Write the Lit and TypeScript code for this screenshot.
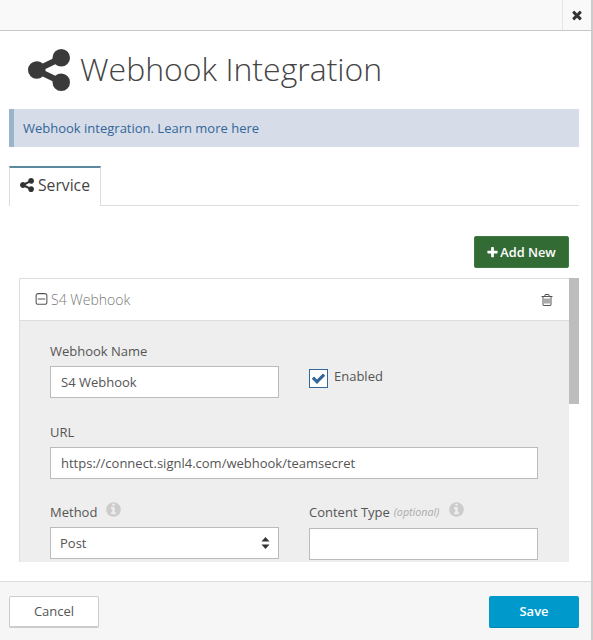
import {css, html, LitElement, svg} from 'lit';
import {customElement} from 'lit/decorators.js';

const SHARE = 'M1344 1024q133 0 226.5 93.5t93.5 226.5-93.5 226.5-226.5 93.5-226.5-93.5-93.5-226.5q0-12 2-34l-360-180q-92 86-218 86-133 0-226.5-93.5t-93.5-226.5 93.5-226.5 226.5-93.5q126 0 218 86l360-180q-2-22-2-34 0-133 93.5-226.5t226.5-93.5 226.5 93.5 93.5 226.5-93.5 226.5-226.5 93.5q-126 0-218-86l-360 180q2 22 2 34t-2 34l360 180q92-86 218-86z';
const TIMES = 'M1490 1322q0 40-28 68l-136 136q-28 28-68 28t-68-28l-294-294-294 294q-28 28-68 28t-68-28l-136-136q-28-28-28-68t28-68l294-294-294-294q-28-28-28-68t28-68l136-136q28-28 68-28t68 28l294 294 294-294q28-28 68-28t68 28l136 136q28 28 28 68t-28 68l-294 294 294 294q28 28 28 68z';
const PLUS = 'M1600 736v192q0 40-28 68t-68 28h-416v416q0 40-28 68t-68 28h-192q-40 0-68-28t-28-68v-416h-416q-40 0-68-28t-28-68v-192q0-40 28-68t68-28h416v-416q0-40 28-68t68-28h192q40 0 68 28t28 68v416h416q40 0 68 28t28 68z';
const CHECK = 'M1671 566q0 40-28 68l-724 724-136 136q-28 28-68 28t-68-28l-136-136-362-362q-28-28-28-68t28-68l136-136q28-28 68-28t68 28l294 295 656-657q28-28 68-28t68 28l136 136q28 28 28 68z';
const TRASH = 'M704 736v576q0 14-9 23t-23 9h-64q-14 0-23-9t-9-23v-576q0-14 9-23t23-9h64q14 0 23 9t9 23zm256 0v576q0 14-9 23t-23 9h-64q-14 0-23-9t-9-23v-576q0-14 9-23t23-9h64q14 0 23 9t9 23zm256 0v576q0 14-9 23t-23 9h-64q-14 0-23-9t-9-23v-576q0-14 9-23t23-9h64q14 0 23 9t9 23zm128 724v-948h-896v948q0 22 7 40.5t14.5 27 10.5 8.5h832q3 0 10.5-8.5t14.5-27 7-40.5zm-672-1076h448l-48-117q-7-9-17-11h-317q-10 2-17 11zm928 32v64q0 14-9 23t-23 9h-96v948q0 83-47 143.5t-113 60.5h-832q-66 0-113-58.5t-47-141.5v-952h-96q-14 0-23-9t-9-23v-64q0-14 9-23t23-9h309l70-167q15-37 54-63t79-26h320q40 0 79 26t54 63l70 167h309q14 0 23 9t9 23z';
const MINUS_SQUARE = 'M1344 800v64q0 14-9 23t-23 9h-832q-14 0-23-9t-9-23v-64q0-14 9-23t23-9h832q14 0 23 9t9 23zm128 448v-832q0-66-47-113t-113-47h-832q-66 0-113 47t-47 113v832q0 66 47 113t113 47h832q66 0 113-47t47-113zm128-832v832q0 119-84.5 203.5t-203.5 84.5h-832q-119 0-203.5-84.5t-84.5-203.5v-832q0-119 84.5-203.5t203.5-84.5h832q119 0 203.5 84.5t84.5 203.5z';
const INFO = 'M1152 1376v-160q0-14-9-23t-23-9h-96v-512q0-14-9-23t-23-9h-320q-14 0-23 9t-9 23v160q0 14 9 23t23 9h96v320h-96q-14 0-23 9t-9 23v160q0 14 9 23t23 9h448q14 0 23-9t9-23zm-128-896v-160q0-14-9-23t-23-9h-192q-14 0-23 9t-9 23v160q0 14 9 23t23 9h192q14 0 23-9t9-23zm640 416q0 209-103 385.5t-279.5 279.5-385.5 103-385.5-103-279.5-279.5-103-385.5 103-385.5 279.5-279.5 385.5-103 385.5 103 279.5 279.5 103 385.5z';

// All icons share the 1792 box, trimmed per icon through viewBox.
const icon = (d: string, cls: string, box = '0 0 1792 1792') => html`
  <svg class=${cls} viewBox=${box} fill="currentColor" aria-hidden="true">
    ${svg`<path d=${d}></path>`}
  </svg>`;

@customElement('app-root')
export class AppRoot extends LitElement {
  static override styles = css`
    :host {
      display: block;
      font-family: 'Open Sans', 'Liberation Sans', sans-serif;
      font-size: 13px;
      color: #444;
    }

    * {
      box-sizing: border-box;
    }

    .modal {
      height: 640px;
      display: flex;
      flex-direction: column;
      background: #fff;
      border-right: 2px solid #ccc;
      overflow: hidden;
    }

    .topbar {
      flex: none;
      height: 31px;
      display: flex;
      justify-content: flex-end;
      background: #f9f9f9;
      border-bottom: 1px solid #c8c8c8;
    }

    .close {
      width: 29px;
      display: flex;
      align-items: center;
      justify-content: center;
      border-left: 1px solid #e4e4e4;
      color: #333;
    }

    .close-icon {
      width: 14px;
      height: 14px;
    }

    .content {
      flex: 1;
      min-height: 0;
      display: flex;
      flex-direction: column;
      padding: 0 12px 0 9px;
    }

    .heading {
      flex: none;
      height: 78px;
      display: flex;
      align-items: center;
      gap: 10px;
      padding-left: 19px;
      color: #3a3a3a;
    }

    .heading-icon {
      width: 42px;
      height: 42px;
      margin-top: -1px;
    }

    h1 {
      margin: -2px 0 0;
      font-size: 32px;
      font-weight: 300;
      line-height: 42px;
      color: #444;
    }

    .alert {
      flex: none;
      height: 38px;
      display: flex;
      align-items: center;
      padding-left: 9px;
      background: #d6dde8;
      border-left: 5px solid #9ab4cc;
      color: #336699;
      font-size: 13px;
    }

    .tabs {
      flex: none;
      margin-top: 19px;
      height: 40px;
      display: flex;
      border-bottom: 1px solid #ddd;
    }

    .tab {
      width: 92px;
      height: 40px;
      display: flex;
      align-items: center;
      gap: 4px;
      padding: 0 0 4px 10px;
      background: #fff;
      border-top: 2px solid #5b8a9f;
      border-left: 1px solid #ddd;
      border-right: 1px solid #ddd;
      font-size: 15.7px;
      color: #444;
    }

    .tab-icon {
      width: 14px;
      height: 14px;
      color: #333;
    }

    .toolbar {
      flex: none;
      display: flex;
      justify-content: flex-end;
      padding: 30px 10px 10px 0;
    }

    .add {
      width: 95px;
      height: 32px;
      display: flex;
      align-items: center;
      justify-content: center;
      gap: 1px;
      background: #336b35;
      border: 1px solid #3f7a41;
      border-radius: 2px;
      color: #fff;
      font-family: inherit;
      font-size: 12.8px;
      font-weight: 600;
      padding: 0 1px 0 0;
    }

    .add-icon {
      width: 13px;
      height: 13px;
    }

    .scroller {
      position: relative;
      flex: 1;
      min-height: 0;
      padding: 0 10px 0 10px;
      overflow: hidden;
    }

    .thumb {
      position: absolute;
      top: 0;
      right: 0;
      width: 10px;
      height: 126px;
      background: #bdbdbd;
    }

    .panel {
      border: 1px solid #ddd;
      border-bottom: 0;
      border-right: 0;
      background: #eee;
    }

    .panel-head {
      height: 42px;
      display: flex;
      align-items: center;
      padding: 0 15px 0 14px;
      background: #fff;
      border-bottom: 1px solid #ddd;
      color: #777;
      font-size: 14px;
      font-weight: 300;
    }

    .minus-icon {
      width: 15px;
      height: 15px;
      margin-right: 2px;
      color: #555;
    }

    .trash-icon {
      width: 14px;
      height: 14px;
      margin-left: auto;
      color: #555;
    }

    .panel-body {
      display: grid;
      grid-template-columns: 229px 229px;
      column-gap: 30px;
      padding: 20px 30px 0 30px;
    }

    .field {
      display: flex;
      flex-direction: column;
      margin-bottom: 24px;
    }

    .wide {
      grid-column: 1 / 3;
      margin-bottom: 23px;
    }

    label {
      display: flex;
      align-items: center;
      height: 19px;
      margin-bottom: 6px;
      color: #555;
      font-size: 13px;
    }

    .optional {
      margin-left: 4px;
      margin-right: 1px;
      color: #aaa;
      font-size: 10.7px;
      font-style: italic;
    }

    .info {
      width: 17px;
      height: 17px;
      margin-left: 8px;
      margin-top: -4px;
      color: #ccc;
    }

    input.text,
    select {
      width: 100%;
      height: 32px;
      padding: 0 9px;
      background: #fff;
      border: 1px solid #bbb;
      border-radius: 0;
      color: #555;
      font-family: inherit;
      font-size: 13px;
      outline: none;
    }

    input.text {
      padding-left: 10px;
    }

    .check-cell {
      display: flex;
      align-items: flex-start;
      gap: 6px;
      padding-top: 28px;
    }

    .check {
      width: 19px;
      height: 19px;
      display: flex;
      align-items: center;
      justify-content: center;
      background: #fff;
      border: 1px solid #336699;
      color: #336699;
    }

    .check-icon {
      width: 15px;
      height: 15px;
    }

    .check-label {
      margin-top: -2px;
      line-height: 18px;
      color: #555;
    }

    .select-wrap {
      position: relative;
    }

    select {
      display: block;
      appearance: none;
    }

    .sort {
      position: absolute;
      right: 9px;
      top: 10px;
      width: 9px;
      height: 12px;
      pointer-events: none;
      fill: #333;
    }

    .content-type {
      margin-top: 1px;
    }

    .footer {
      flex: none;
      height: 59px;
      margin-top: 19px;
      display: flex;
      align-items: flex-start;
      justify-content: space-between;
      padding: 14px 12px 0 9px;
      background: #f6f6f6;
      border-top: 1px solid #ddd;
    }

    .btn {
      width: 90px;
      height: 32px;
      padding: 0 0 2px;
      border-radius: 2px;
      font-family: inherit;
      font-size: 13px;
    }

    .cancel {
      background: #fff;
      border: 1px solid #ccc;
      border-bottom-width: 2px;
      color: #555;
    }

    .save {
      background: #0099cc;
      border: 0;
      border-bottom: 1px solid #0088b5;
      color: #fff;
      font-weight: 600;
    }
  `;

  override render() {
    return html`
      <div class="modal">
        <div class="topbar">
          <div class="close">${icon(TIMES, 'close-icon')}</div>
        </div>
        <div class="content">
          <div class="heading">
            ${icon(SHARE, 'heading-icon', '128 128 1536 1536')}
            <h1>Webhook Integration</h1>
          </div>
          <div class="alert">Webhook integration. Learn more here</div>
          <div class="tabs">
            <div class="tab">
              ${icon(SHARE, 'tab-icon', '128 128 1536 1536')}
              <span>Service</span>
            </div>
          </div>
          <div class="toolbar">
            <button class="add">${icon(PLUS, 'add-icon')}<span>Add New</span></button>
          </div>
          <div class="scroller">
            <div class="thumb"></div>
            <div class="panel">
              <div class="panel-head">
                ${icon(MINUS_SQUARE, 'minus-icon')}
                <span>S4 Webhook</span>
                ${icon(TRASH, 'trash-icon')}
              </div>
              <div class="panel-body">
                <div class="field">
                  <label>Webhook Name</label>
                  <input class="text" .value=${'S4 Webhook'} />
                </div>
                <div class="check-cell">
                  <span class="check">${icon(CHECK, 'check-icon')}</span>
                  <span class="check-label">Enabled</span>
                </div>
                <div class="field wide">
                  <label>URL</label>
                  <input class="text" .value=${'https://connect.signl4.com/webhook/teamsecret'} />
                </div>
                <div class="field">
                  <label>Method ${icon(INFO, 'info')}</label>
                  <div class="select-wrap">
                    <select><option>Post</option></select>
                    <svg class="sort" viewBox="0 0 9 12">
                      <polygon points="4.5,0 8.5,4.5 0.5,4.5"></polygon>
                      <polygon points="0.5,7.5 8.5,7.5 4.5,12"></polygon>
                    </svg>
                  </div>
                </div>
                <div class="field">
                  <label>Content Type <span class="optional">(optional)</span>${icon(INFO, 'info')}</label>
                  <input class="text content-type" />
                </div>
              </div>
            </div>
          </div>
        </div>
        <div class="footer">
          <button class="btn cancel">Cancel</button>
          <button class="btn save">Save</button>
        </div>
      </div>
    `;
  }
}
